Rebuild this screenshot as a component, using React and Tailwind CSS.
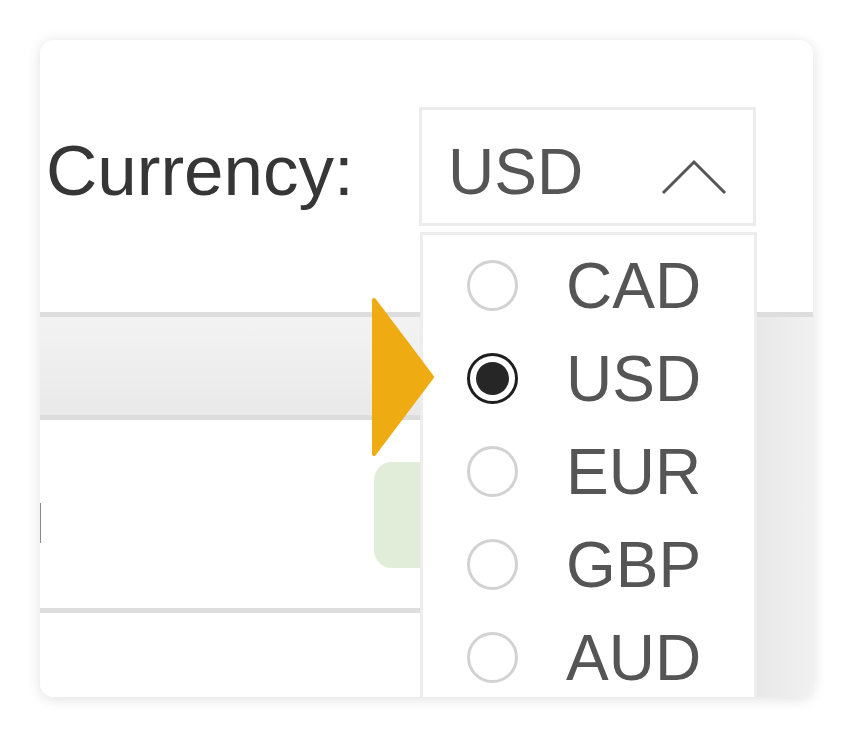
import React from "react";

const font = { fontFamily: '"Liberation Sans", Arial, sans-serif' };

function Radio({ checked }) {
  if (checked) {
    return (
      <div className="w-[51px] h-[51px] rounded-full border-[3px] border-[#1e1e1e] flex items-center justify-center shrink-0">
        <div className="w-[33px] h-[33px] rounded-full bg-[#262626]" />
      </div>
    );
  }
  return <div className="w-[51px] h-[51px] rounded-full border-[3px] border-[#d2d2d2] shrink-0" />;
}

export default function App() {
  const options = ["CAD", "USD", "EUR", "GBP", "AUD"];
  return (
    <div className="w-[853px] h-[737px] bg-white pt-[40px] pl-[40px]" style={font}>
      <div className="relative w-[773px] h-[657px] rounded-[14px] bg-white overflow-hidden shadow-[0_2px_14px_rgba(0,0,0,0.13)] flex flex-col">
        {/* top section */}
        <div className="h-[272px] shrink-0 flex items-start pt-[67px]">
          <div className="flex items-center h-[119px]">
            <div className="pl-[6px] w-[379px] text-[71px] leading-none text-[#363636] mt-[7px]">
              Currency:
            </div>
            <div className="w-[337px] h-[119px] border-[3px] border-[#ececec] flex items-center justify-between pl-[26px] pr-[26px]">
              <span className="text-[64px] leading-none text-[#555555] mt-[10px]">USD</span>
              <svg width="66" height="36" viewBox="0 0 66 36" className="mt-[20px]">
                <polyline points="2,34 33,3 64,34" fill="none" stroke="#555555" strokeWidth="3" />
              </svg>
            </div>
          </div>
        </div>

        {/* body */}
        <div className="flex-1 flex flex-col">
          <div className="h-[5px] bg-[#dddddd] shrink-0" />
          <div className="flex-1 flex">
            <div className="flex-1 flex flex-col">
              <div className="h-[98px] bg-gradient-to-b from-[#f3f3f3] to-[#e9e9e9]" />
              <div className="h-[5px] bg-[#dcdcdc]" />
              <div className="relative h-[188px] bg-white">
                <div className="absolute left-0 top-[83px] w-[1px] h-[40px] bg-[#8a8a8a]" />
                <div className="absolute left-[334px] top-[42px] w-[120px] h-[106px] rounded-[18px] bg-[#e1ecd9]" />
              </div>
              <div className="h-[5px] bg-[#dedede]" />
              <div className="flex-1 bg-white" />
            </div>
            <div className="w-[56px] bg-gradient-to-r from-[#e8e8e8] to-[#f1f1f1]" />
          </div>
        </div>

        {/* dropdown menu */}
        <div className="absolute left-[380px] top-[192px] w-[337px] h-[480px] bg-white border-[3px] border-[#ededed] pt-[4px]">
          {options.map((o) => (
            <div key={o} className="h-[93px] flex items-center pl-[44px]">
              <Radio checked={o === "USD"} />
              <span className="ml-[48px] text-[64px] leading-none text-[#555555]">{o}</span>
            </div>
          ))}
        </div>

        {/* pointer arrow */}
        <svg
          className="absolute left-[330px] top-[256px]"
          width="66"
          height="164"
          viewBox="0 0 66 164"
        >
          <path
            d="M4 4 L62 81 L4 158 Z"
            fill="#efab12"
            stroke="#efab12"
            strokeWidth="4"
            strokeLinejoin="round"
          />
        </svg>
      </div>
    </div>
  );
}
